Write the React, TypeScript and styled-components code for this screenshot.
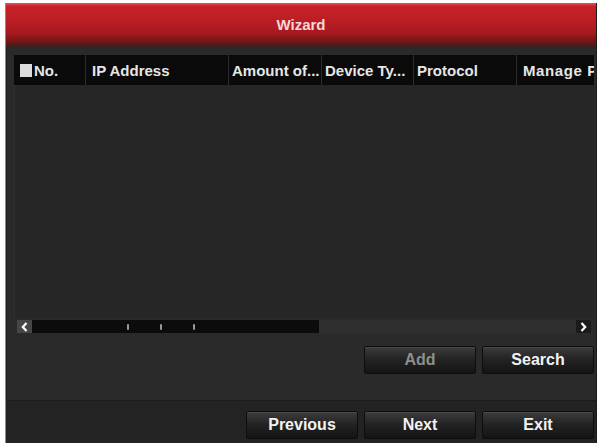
import styled, { createGlobalStyle } from 'styled-components';

const GlobalStyle = createGlobalStyle`
  html, body {
    margin: 0;
    padding: 0;
    background: #ffffff;
  }
  body {
    font-family: "Liberation Sans", Arial, sans-serif;
  }
`;

const Window = styled.div`
  margin: 3px 0 0 5px;
  width: 592px;
  height: 440px;
  box-sizing: border-box;
  border-left: 1px solid #8a8a8a;
  border-right: 1px solid #1a1a1a;
  background: #272727;
  display: flex;
  flex-direction: column;
  overflow: hidden;
`;

const TitleBar = styled.div`
  height: 44px;
  flex: none;
  display: flex;
  align-items: center;
  justify-content: center;
  background: linear-gradient(
    #e0585a 0px,
    #c8222a 3px,
    #bf1f25 14px,
    #a61a1f 30px,
    #6a1515 40px,
    #2f2222 44px
  );
  color: #f7d7d7;
  font-size: 15px;
  font-weight: bold;
  padding-bottom: 2px;
  box-sizing: border-box;
`;

const Content = styled.div`
  flex: 1;
  display: flex;
  flex-direction: column;
  padding: 8px 2px 0 7px;
  border-left: 1px solid #1f1f1f;
  background: #2a2a2a;
`;

const HeaderRow = styled.div`
  height: 30px;
  display: flex;
  background: #0a0a0a;
  overflow: hidden;
`;

const HeaderCell = styled.div<{ $w?: number; $pad: number }>`
  ${(p) => (p.$w ? `width: ${p.$w}px; flex: none;` : 'flex: 1; min-width: 0;')}
  box-sizing: border-box;
  padding-left: ${(p) => p.$pad}px;
  display: flex;
  align-items: center;
  gap: 2px;
  color: #e6e6e6;
  font-size: 15px;
  font-weight: bold;
  white-space: nowrap;
  overflow: hidden;
  border-right: 1px solid #2c2c2c;
  &:last-child {
    border-right: none;
    letter-spacing: 0.6px;
  }
`;

const Check = styled.span`
  width: 12px;
  height: 13px;
  background: #dcdcdc;
  flex: none;
`;

const TableBody = styled.div`
  height: 233px;
  background: #262626;
  border-left: 1px solid #303030;
`;

const ScrollBar = styled.div`
  margin: 2px 3px 0 3px;
  height: 13px;
  display: flex;
  background: #2f2f2f;
`;

const ArrowBtn = styled.div<{ $light?: boolean }>`
  width: 15px;
  flex: none;
  display: flex;
  align-items: center;
  justify-content: center;
  background: ${(p) => (p.$light ? '#464646' : '#1a1a1a')};
`;

const Thumb = styled.div`
  width: 287px;
  flex: none;
  background: #0c0c0c;
  display: flex;
  align-items: center;
  padding-left: 95px;
  gap: 31px;
  box-sizing: border-box;
`;

const Tick = styled.span`
  width: 2px;
  height: 6px;
  background: #9a9a9a;
  border-radius: 1px;
`;

const Track = styled.div`
  flex: 1;
  background: #2f2f2f;
`;

const ActionRow = styled.div`
  margin-top: 13px;
  display: flex;
  justify-content: flex-end;
  gap: 6px;
`;

const Button = styled.button<{ $disabled?: boolean }>`
  width: 112px;
  height: 28px;
  box-sizing: border-box;
  border: 1px solid #0d0d0d;
  border-radius: 2px;
  background: linear-gradient(#3d3d3d, #242424 45%, #141414);
  box-shadow: inset 0 1px 0 #4a4a4a;
  color: ${(p) => (p.$disabled ? '#8e8e8e' : '#f2f2f2')};
  font-family: "Liberation Sans", Arial, sans-serif;
  font-size: 16px;
  font-weight: bold;
  padding: 0;
`;

const Footer = styled.div`
  height: 43px;
  flex: none;
  box-sizing: border-box;
  padding: 10px 2px 0 0;
  display: flex;
  justify-content: flex-end;
  gap: 6px;
  background: #232323;
  border-top: 1px solid #1c1c1c;
`;

const columns: { label: string; w?: number; pad: number }[] = [
  { label: 'No.', w: 72, pad: 6 },
  { label: 'IP Address', w: 143, pad: 6 },
  { label: 'Amount of...', w: 93, pad: 3 },
  { label: 'Device Ty...', w: 92, pad: 3 },
  { label: 'Protocol', w: 103, pad: 3 },
  { label: 'Manage Port', pad: 6 },
];

const Chevron = ({ dir }: { dir: 'left' | 'right' }) => (
  <svg width="7" height="10" viewBox="0 0 7 10">
    <path
      d={dir === 'left' ? 'M5.5 1 L1.8 5 L5.5 9' : 'M1.5 1 L5.2 5 L1.5 9'}
      fill="none"
      stroke="#ffffff"
      strokeWidth="2.2"
    />
  </svg>
);

export default function App() {
  return (
    <>
      <GlobalStyle />
      <Window>
        <TitleBar>Wizard</TitleBar>
        <Content>
          <HeaderRow>
            {columns.map((c, i) => (
              <HeaderCell key={i} $w={c.w} $pad={c.pad}>
                {i === 0 && <Check />}
                {c.label}
              </HeaderCell>
            ))}
          </HeaderRow>
          <TableBody />
          <ScrollBar>
            <ArrowBtn $light>
              <Chevron dir="left" />
            </ArrowBtn>
            <Thumb>
              <Tick />
              <Tick />
              <Tick />
            </Thumb>
            <Track />
            <ArrowBtn>
              <Chevron dir="right" />
            </ArrowBtn>
          </ScrollBar>
          <ActionRow>
            <Button $disabled>Add</Button>
            <Button>Search</Button>
          </ActionRow>
        </Content>
        <Footer>
          <Button>Previous</Button>
          <Button>Next</Button>
          <Button>Exit</Button>
        </Footer>
      </Window>
    </>
  );
}
